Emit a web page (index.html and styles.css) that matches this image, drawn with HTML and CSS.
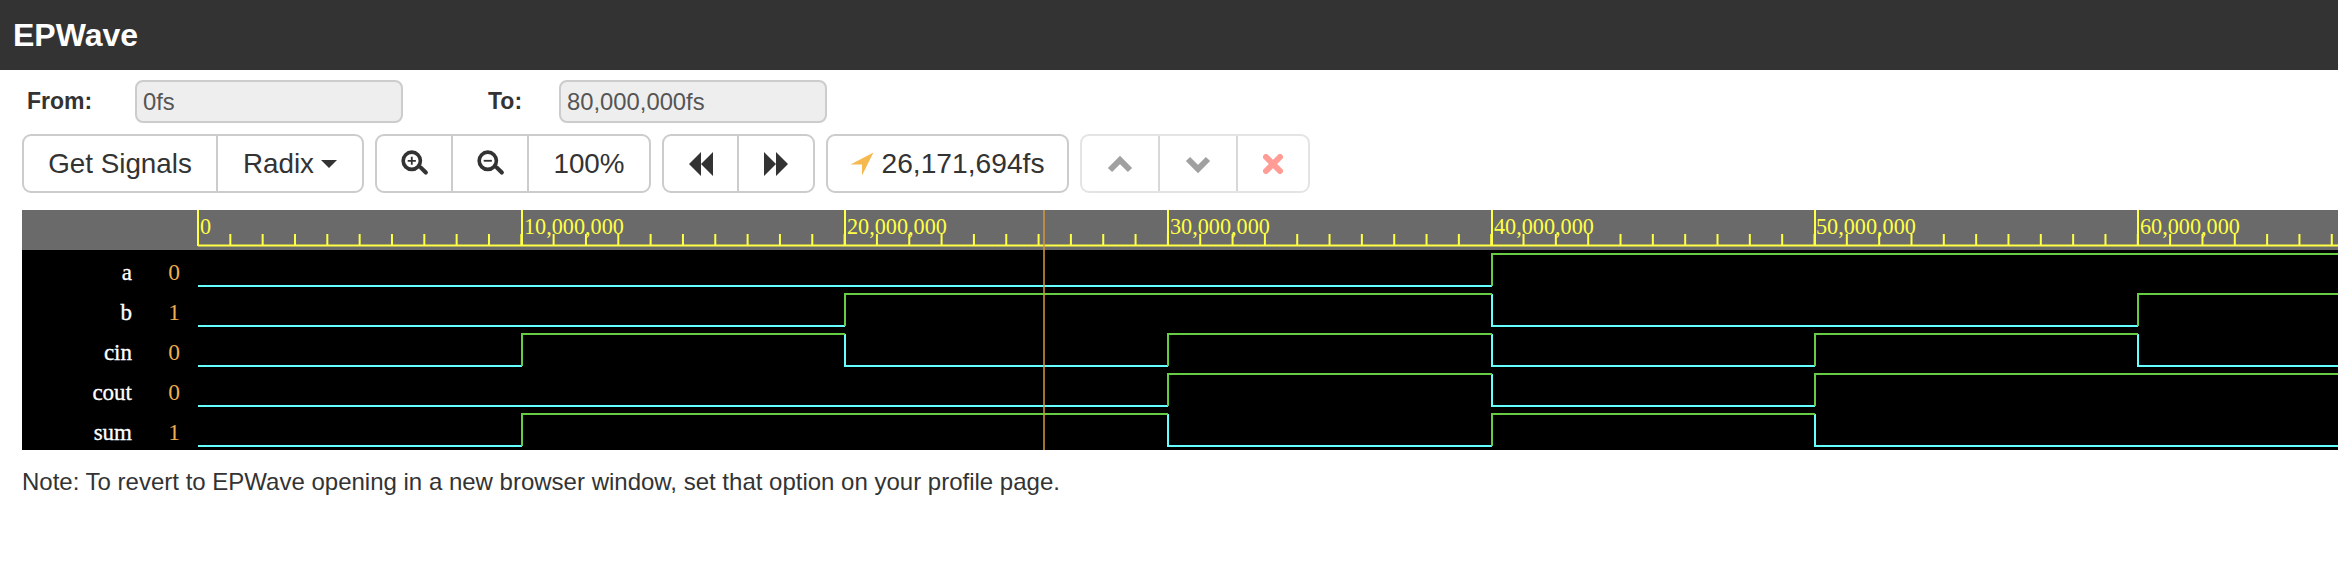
FILE: index.html

```html
<!DOCTYPE html>
<html lang="en">
<head>
    <meta charset="UTF-8">
    <title>EPWave</title>
    <link rel="stylesheet" href="styles.css">
</head>
<body>
    <header class="topbar">
        <h1 class="brand">EPWave</h1>
    </header>

    <div class="range-row">
        <label class="range-label label-from">From:</label>
        <input class="range-input" type="text" value="0fs" disabled>
        <label class="range-label label-to">To:</label>
        <input class="range-input" type="text" value="80,000,000fs" disabled>
    </div>

    <div class="toolbar">
        <div class="btn-group">
            <button class="btn btn-signals">Get Signals</button>
            <button class="btn btn-radix">Radix
                <svg class="caret" width="16" height="8" viewBox="0 0 16 8"><path d="M0 0H16L8 8Z"/></svg>
            </button>
        </div>
        <div class="btn-group">
            <button class="btn btn-icon" title="Zoom in">
                <svg width="29" height="29" viewBox="0 0 32 32"><circle cx="13" cy="13" r="9.5" class="glass"/><path d="M23 20.5L28.5 26" class="handle"/><path d="M13 8.5V17.5M8.5 13H17.5" class="sign"/></svg>
            </button>
            <button class="btn btn-icon" title="Zoom out">
                <svg width="29" height="29" viewBox="0 0 32 32"><circle cx="13" cy="13" r="9.5" class="glass"/><path d="M23 20.5L28.5 26" class="handle"/><path d="M8.5 13H17.5" class="sign"/></svg>
            </button>
            <button class="btn btn-percent">100%</button>
        </div>
        <div class="btn-group">
            <button class="btn btn-step" title="Previous">
                <svg width="26" height="24" viewBox="0 0 26 24"><path d="M1 12L13 0V24ZM13 12L25 0V24Z"/></svg>
            </button>
            <button class="btn btn-step" title="Next">
                <svg width="26" height="24" viewBox="0 0 26 24"><path d="M1 0L13 12L1 24ZM13 0L25 12L13 24Z"/></svg>
            </button>
        </div>
        <button class="btn btn-single btn-cursor">
            <svg class="arrow" width="24" height="24" viewBox="0 0 22 22"><path d="M21.5 0.5L11 21.5V11.5H0.5Z"/></svg>
            26,171,694fs
        </button>
        <div class="btn-group group-faded">
            <button class="btn btn-action" title="Move up">
                <svg width="28" height="20" viewBox="0 0 28 20"><path d="M4 16L14 6L24 16" class="chevron"/></svg>
            </button>
            <button class="btn btn-action" title="Move down">
                <svg width="28" height="20" viewBox="0 0 28 20"><path d="M4 5L14 15L24 5" class="chevron"/></svg>
            </button>
            <button class="btn btn-action" title="Remove">
                <svg width="20" height="20" viewBox="0 0 20 20"><path d="M3 3L17 17M17 3L3 17" class="cross"/></svg>
            </button>
        </div>
    </div>

    <svg class="wave" width="2316" height="240" viewBox="22 210 2316 240">
        <rect x="22" y="210" width="2316" height="40" class="ruler-bg"/>
        <rect x="22" y="250" width="2316" height="200" class="wave-bg"/>

        <!-- ruler -->
        <line x1="197" y1="239.5" x2="2338" y2="239.5" class="tick-minor"/>
        <path d="M198 245.5H2338M198 210V246M522 210V246M845 210V246M1168 210V246M1492 210V246M1815 210V246M2138 210V246" class="tick-major"/>
        <text x="200" y="234" class="ruler-text">0</text>
        <text x="524" y="234" class="ruler-text">10,000,000</text>
        <text x="847" y="234" class="ruler-text">20,000,000</text>
        <text x="1170" y="234" class="ruler-text">30,000,000</text>
        <text x="1494" y="234" class="ruler-text">40,000,000</text>
        <text x="1816" y="234" class="ruler-text">50,000,000</text>
        <text x="2140" y="234" class="ruler-text">60,000,000</text>

        <!-- signal names and values at cursor -->
        <text x="132" y="280" class="sig-name">a</text>
        <text x="132" y="320" class="sig-name">b</text>
        <text x="132" y="360" class="sig-name">cin</text>
        <text x="132" y="400" class="sig-name">cout</text>
        <text x="132" y="440" class="sig-name">sum</text>
        <text x="174" y="280" class="sig-value">0</text>
        <text x="174" y="320" class="sig-value">1</text>
        <text x="174" y="360" class="sig-value">0</text>
        <text x="174" y="400" class="sig-value">0</text>
        <text x="174" y="440" class="sig-value">1</text>

        <!-- low + falling -->
        <path class="trace-low" d="M198 286H1492
            M198 326H845 M1492 294V326H2138
            M198 366H522 M845 334V366H1168 M1492 334V366H1815 M2138 334V366H2338
            M198 406H1168 M1492 374V406H1815
            M198 446H522 M1168 414V446H1492 M1815 414V446H2338"/>
        <!-- high + rising -->
        <path class="trace-high" d="M1492 286V254H2338
            M845 326V294H1492 M2138 326V294H2338
            M522 366V334H845 M1168 366V334H1492 M1815 366V334H2138
            M1168 406V374H1492 M1815 406V374H2338
            M522 446V414H1168 M1492 446V414H1815"/>

        <line x1="1044" y1="210" x2="1044" y2="450" class="cursor-line"/>
    </svg>

    <p class="note">Note: To revert to EPWave opening in a new browser window, set that option on your profile page.</p>
</body>
</html>
```

FILE: styles.css

```css
body {
    margin: 0;
    padding: 0;
    background-color: #FFFFFF;
    color: #333333;
    font-family: "Liberation Sans", Arial, sans-serif;
    overflow: hidden;
}

.topbar {
    height: 70px;
    padding-left: 13px;
    background-color: #333333;
    display: flex;
    align-items: center;
}

.brand {
    margin: 0;
    font-size: 32px;
    font-weight: bold;
    color: #FFFFFF;
}

/* from / to */
.range-row {
    display: flex;
    align-items: center;
    margin-top: 10px;
    height: 43px;
}

.range-label {
    font-size: 23px;
    font-weight: bold;
}

.label-from {
    width: 108px;
    margin-left: 27px;
}

.label-to {
    width: 71px;
    margin-left: 85px;
}

.range-input {
    box-sizing: border-box;
    width: 268px;
    height: 43px;
    padding: 0 6px;
    border: 2px solid #CCCCCC;
    border-radius: 8px;
    background-color: #EEEEEE;
    color: #555555;
    font-family: inherit;
    font-size: 23.8px;
}

/* buttons */
.toolbar {
    display: flex;
    gap: 11px;
    margin: 11px 0 17px 22px;
    height: 59px;
}

.btn-group,
.btn-single {
    box-sizing: border-box;
    border: 2px solid #CCCCCC;
    border-radius: 9px;
    background-color: #FFFFFF;
}

.btn-group {
    display: flex;
}

.btn {
    display: flex;
    align-items: center;
    justify-content: center;
    height: 100%;
    padding: 0;
    border: none;
    border-right: 2px solid #CCCCCC;
    background: none;
    color: #333333;
    font-family: inherit;
    font-size: 27.8px;
}

.btn:last-child {
    border-right: none;
}

.btn-signals { width: 194px; }
.btn-radix { width: 144px; gap: 7px; }
.btn-icon { width: 76px; }
.btn-percent { width: 120px; }
.btn-step { width: 75px; }
.btn-step:last-child { width: 74px; }
.btn-action { width: 78px; }
.btn-action:last-child { width: 70px; }

.btn-single {
    width: 243px;
    gap: 7px;
    border: 2px solid #CCCCCC;
    font-size: 28.2px;
}

.group-faded {
    border-color: #E4E4E4;
}

.group-faded .btn {
    border-right-color: #D8D8D8;
}

.caret path,
.btn-step path {
    fill: #333333;
}

.arrow path {
    fill: #F6B950;
}

.glass {
    fill: none;
    stroke: #333333;
    stroke-width: 4;
}

.handle {
    fill: none;
    stroke: #333333;
    stroke-width: 4.5;
    stroke-linecap: round;
}

.sign {
    fill: none;
    stroke: #333333;
    stroke-width: 2;
}

.chevron {
    fill: none;
    stroke: #A0A0A0;
    stroke-width: 6;
}

.cross {
    fill: none;
    stroke: #FF9C96;
    stroke-width: 6;
    stroke-linecap: round;
}

/* waveform */
.wave {
    display: block;
    margin-left: 22px;
}

.ruler-bg { fill: #6A6A6A; }
.wave-bg { fill: #000000; }

.tick-major {
    fill: none;
    stroke: #FFFF44;
    stroke-width: 2;
}

.tick-minor {
    stroke: #FFFF44;
    stroke-width: 11;
    stroke-dasharray: 2 30.33;
}

.ruler-text {
    fill: #FFFF44;
    font-family: "Liberation Serif", "Times New Roman", serif;
    font-size: 22.2px;
}

.sig-name {
    fill: #FFFFFF;
    stroke: #FFFFFF;
    stroke-width: 0.3;
    font-family: "Liberation Serif", "Times New Roman", serif;
    font-size: 23px;
    text-anchor: end;
}

.sig-value {
    fill: #F0AD4E;
    font-family: "Liberation Serif", "Times New Roman", serif;
    font-size: 23.5px;
    text-anchor: middle;
}

.trace-low {
    fill: none;
    stroke: #66FFFF;
    stroke-width: 2;
}

.trace-high {
    fill: none;
    stroke: #66CC44;
    stroke-width: 2;
}

.cursor-line {
    stroke: #D49A3C;
    stroke-width: 1.5;
}

.note {
    margin: 18px 0 0 22px;
    font-size: 24px;
}
```
